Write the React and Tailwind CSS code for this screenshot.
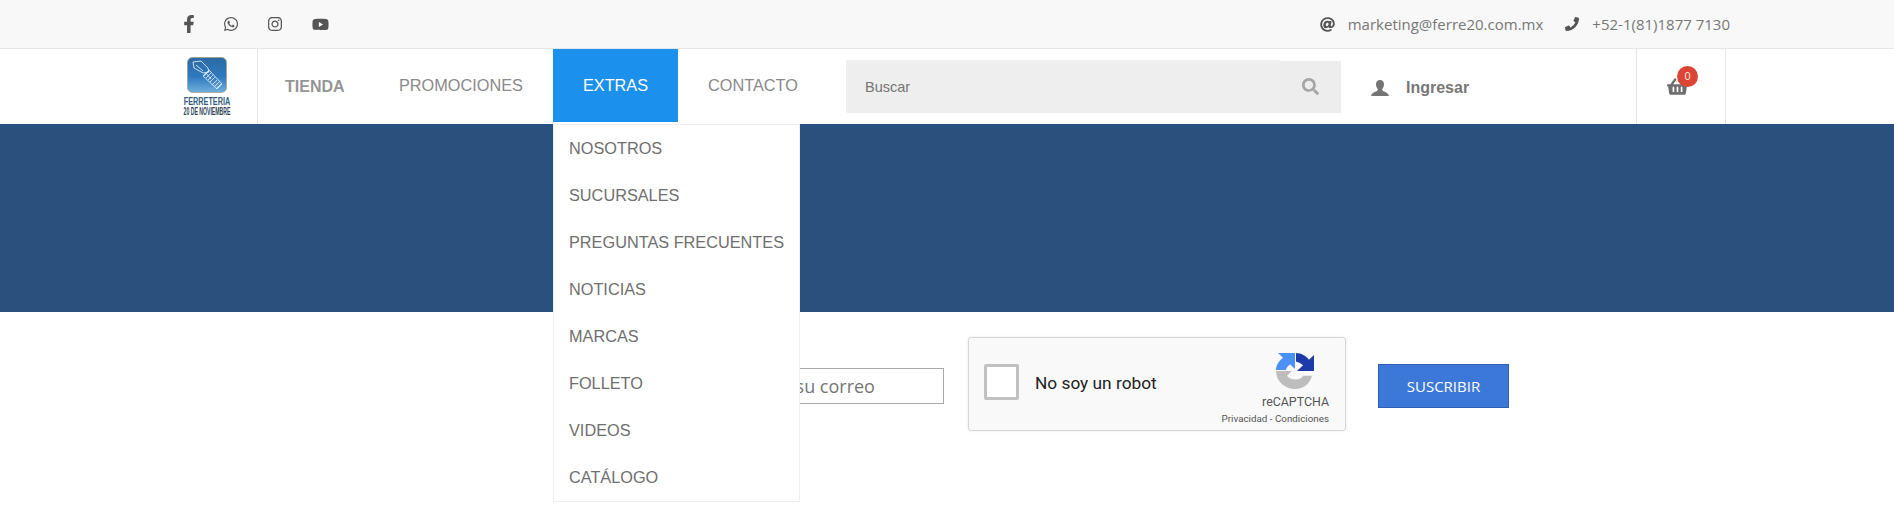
import { FaFacebookF, FaWhatsapp, FaInstagram, FaYoutube, FaAt, FaPhoneAlt, FaSearch, FaShoppingBasket } from 'react-icons/fa';

const menu = ['NOSOTROS', 'SUCURSALES', 'PREGUNTAS FRECUENTES', 'NOTICIAS', 'MARCAS', 'FOLLETO', 'VIDEOS', 'CATÁLOGO'];

function Logo() {
  return (
    <div className="flex w-[48px] flex-col items-center">
      <svg width="48" height="36" viewBox="0 0 48 36">
        <defs>
          <linearGradient id="logoBg" x1="0" y1="0" x2="0" y2="1">
            <stop offset="0" stopColor="#2c6aa3" />
            <stop offset="0.55" stopColor="#2f79c0" />
            <stop offset="1" stopColor="#6fb0dc" />
          </linearGradient>
        </defs>
        <rect x="4.5" y="0.5" width="39" height="35" rx="5" fill="url(#logoBg)" stroke="#a89a80" strokeWidth="0.7" />
        <g fill="none" stroke="#dbe8f4" strokeWidth="0.9">
          <path d="M10 5l8-1 7 7 1 4-6 1-9-5z" />
          <path d="M13 8l7 6" />
          <path d="M20 19l6-6 13 14-5 5z" />
          <path d="M23 16l5 6M26 14l-5 5M28 16l-5 5M30 18l-5 5M32 20l-5 5M34 23l-5 5M36 25l-5 5M38 27l-5 5" />
        </g>
      </svg>
      <div className="mt-[3px] flex h-[10px] w-[48px] scale-x-[0.66] items-center justify-center whitespace-nowrap text-[11px] leading-[10px] font-bold text-[#35607e]">FERRETERIA</div>
      <div className="flex h-[10px] w-[48px] scale-x-[0.49] items-center justify-center whitespace-nowrap text-[10.5px] leading-[10px] font-bold text-[#2f4457]">20 DE NOVIEMBRE</div>
    </div>
  );
}

function RecaptchaIcon() {
  return (
    <svg width="38" height="36" viewBox="0 0 38 38" preserveAspectRatio="none">
      <path fill="#bdbdbd" d="M0 19H16L11 24C13 27 16 28 20 28C24 28 26 26 27 24H36C34 32 28 38 19 38C9 38 0 30 0 19Z" />
      <path fill="#4a90f5" d="M2 0H19V17L14 12C12 14 10 16 10 18H0C0 13 3 8 7 5Z" />
      <path fill="#1c3aa9" d="M20 0C25 0 30 3 33 7L38 2V19H21L27 13C25 11 23 10 20 9Z" />
    </svg>
  );
}

function UserIcon() {
  return (
    <svg width="18" height="16" viewBox="0 0 18 16" fill="#757575">
      <path d="M9 0C6.3 0 5 2 5 4.2C5 6.2 5.8 8 6.8 9C7 10 6.6 10.8 5 11.4C3 12.2 0.8 12.8 0 16H18C17.2 12.8 15 12.2 13 11.4C11.4 10.8 11 10 11.2 9C12.2 8 13 6.2 13 4.2C13 2 11.7 0 9 0Z" />
    </svg>
  );
}

export default function App() {
  return (
    <div className="relative h-[505px] w-[1894px] overflow-hidden bg-white font-['Liberation_Sans',sans-serif]">
      {/* top bar */}
      <div className="flex h-[49px] items-center border-b border-[#e6e6e6] bg-[#f8f8f8] shadow-[0_1px_2px_rgba(0,0,0,0.06)] pl-[180px] pr-[164px] text-[#555]">
        <div className="flex items-center">
          <FaFacebookF size={18} className="mr-[25px]" />
          <FaWhatsapp size={16} className="mr-[28px]" />
          <FaInstagram size={16} className="mr-[29px]" />
          <FaYoutube size={17} />
        </div>
        <div className="ml-auto flex items-center font-['Open_Sans',sans-serif] text-[15px] text-[#777]">
          <FaAt size={15} className="mr-[13px] text-[#555]" />
          <span>marketing@ferre20.com.mx</span>
          <FaPhoneAlt size={14} className="ml-[22px] mr-[13px] -scale-x-100 text-[#555]" />
          <span>+52-1(81)1877 7130</span>
        </div>
      </div>

      {/* nav */}
      <div className="relative flex h-[75px] items-start bg-white text-[16.3px] text-[#8a8a8a]">
        <div className="ml-[171px] flex h-[75px] w-[87px] items-start border-r border-[#e6e6e6] pt-[8px] pl-[12px]">
          <Logo />
        </div>
        <div className="flex h-[73px] w-[112px] items-center pl-[27px] pt-[2px] font-bold text-[16px] text-[#959595]">TIENDA</div>
        <div className="flex h-[73px] w-[183px] items-center pl-[29px]">PROMOCIONES</div>
        <div className="flex h-[73px] w-[125px] items-center justify-center bg-[#1b90ed] text-white">EXTRAS</div>
        <div className="flex h-[73px] w-[149px] items-center pl-[30px]">CONTACTO</div>
        <div className="ml-[19px] mt-[11px] flex h-[53px] w-[495px] items-start">
          <div className="flex h-[53px] w-[434px] items-center rounded-l-[2px] bg-[#eeeeee] pl-[19px] pt-[2px] text-[14.5px] text-[#757575]">Buscar</div>
          <div className="mt-[1px] flex h-[52px] w-[61px] items-center justify-center bg-[#ededed] text-[#a5a5a5]">
            <FaSearch size={17} className="mb-[2px]" />
          </div>
        </div>
        <div className="ml-[30px] mt-[27px] flex items-center text-[16px]">
          <UserIcon />
          <span className="ml-[17px] font-bold text-[#777]">Ingresar</span>
        </div>
        <div className="relative ml-[167px] flex h-[75px] w-[90px] items-center justify-center border-x border-[#e6e6e6] text-[#6e6e6e]">
          <FaShoppingBasket size={21} className="mr-[8px] mb-[1px]" />
          <span className="absolute left-[40px] top-[17px] flex h-[21px] w-[21px] items-center justify-center rounded-full bg-[#dc4535] text-[11px] text-[#ffe9d8]">0</span>
        </div>
      </div>

      {/* banner */}
      <div className="h-[188px] bg-[#2a517d]" />

      {/* newsletter */}
      <div className="mt-[25px] flex items-center">
        <input
          className="ml-[700px] mt-[4px] h-[36px] w-[244px] border border-[#a9a9a9] bg-white pl-[28px] font-['Open_Sans',sans-serif] text-[18px] outline-none placeholder:text-[#757575]"
          placeholder="Ingresa su correo"
          readOnly
        />
        <div className="relative ml-[24px] h-[94px] w-[378px] rounded-[3px] border border-[#d6d6d6] bg-[#f9f9f9] shadow-[0_0_3px_rgba(0,0,0,0.1)] font-['Roboto',sans-serif]">
          <div className="flex items-start">
            <div className="ml-[15px] mt-[26px] h-[36px] w-[35px] rounded-[2px] border-[3px] border-[#c1c1c1] bg-white" />
            <div className="ml-[16px] mt-[35px] text-[17.3px] leading-[20px] font-normal text-[#222]">No soy un robot</div>
            <div className="ml-auto mr-[16px] flex flex-col items-end">
              <div className="mr-[15px] mt-[15px]"><RecaptchaIcon /></div>
              <div className="mt-[6px] text-[12.4px] leading-[14px] text-[#555]">reCAPTCHA</div>
              <div className="mt-[4px] text-[9.8px] leading-[12px] text-[#555]">Privacidad - Condiciones</div>
            </div>
          </div>
        </div>
        <button className="ml-[32px] mt-[4px] h-[44px] w-[131px] border border-[#2f5fb0] bg-[#3c78d8] font-['Open_Sans',sans-serif] text-[15px] text-white">SUSCRIBIR</button>
      </div>

      {/* dropdown */}
      <div className="absolute left-[553px] top-[124px] w-[247px] border border-[#eeeeee] bg-white text-[16.3px] text-[#6f6f6f]">
        {menu.map((item) => (
          <div key={item} className="flex h-[47px] items-center pl-[15px]">{item}</div>
        ))}
      </div>
    </div>
  );
}
